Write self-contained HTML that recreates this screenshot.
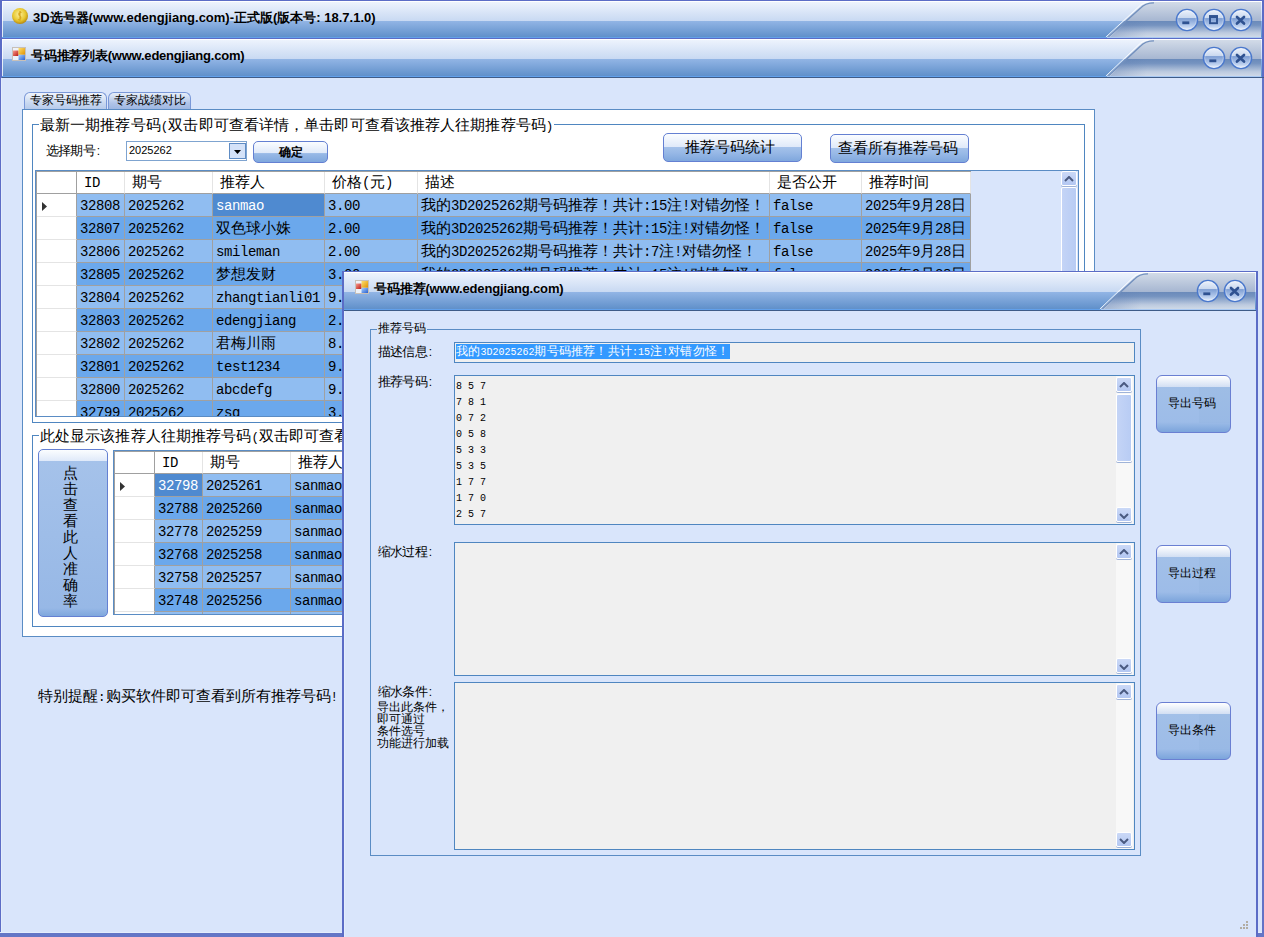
<!DOCTYPE html><html><head><meta charset="utf-8"><style>
*{margin:0;padding:0;box-sizing:border-box}
html,body{width:1264px;height:937px;overflow:hidden;background:#d9e5fb;font-family:"Liberation Sans",sans-serif;color:#000}
body{position:relative}
.a{position:absolute}
.ttl{position:absolute;font-weight:bold;font-size:13px;white-space:nowrap;color:#000;line-height:14px}
.mono{font-family:"Liberation Mono",monospace}
.gb{position:absolute;border:1px solid #4f86c0}
.gbt{position:absolute;padding:0 1px;font-size:14px;white-space:nowrap;line-height:14px}
.btn{position:absolute;border:1px solid #6480d2;border-radius:5px;background:linear-gradient(#fbfdff 0px,#dfe9f9 var(--wh,11px),#a5c2ea var(--wh,11px),#97b8e6 calc(100% - 8px),#7fa7dd 100%);font-size:15px;text-align:center;white-space:nowrap}
.grid{position:absolute;border:1px solid #5a8cc4;background:#d9e5fb;overflow:hidden}
.c{position:absolute;height:23px;border-right:1px solid #a0a0a0;border-bottom:1px solid #a0a0a0;font-size:14px;line-height:25px;padding-left:3px;overflow:hidden;white-space:nowrap;font-family:"Liberation Mono",monospace}
.hc{background:#fff;border-right:1px solid #e4e4e4;border-bottom:1px solid #a0a0a0;padding-left:7px;line-height:24px}
.rh{background:#fff;border-right:1px solid #a0a0a0;border-bottom:1px solid #e4e4e4}
.l{background:#90bdf1}
.d{background:#6ba8ec}
.sel{background:#4f8ad0;color:#fff}
.tb{position:absolute;border:1px solid #4f86c0;background:#f0f0f0}
.sb{position:absolute;background:#f8f8f8}
.arr{position:absolute;width:16px;height:15px;border:1px solid #fff;border-radius:2px;box-shadow:0 1px 0 #9fb3d8;background:linear-gradient(#cbd9f7,#b3c7f2)}
</style></head><body>
<div class="a" style="left:0;top:0;width:1px;height:937px;background:#5d6dc6"></div>
<div class="a" style="left:1px;top:78px;width:1px;height:855px;background:#e4edfc"></div>
<div class="a" style="left:1262px;top:0;width:2px;height:937px;background:#6272c6"></div>
<div class="a" style="left:0;top:932px;width:1262px;height:1px;background:#e4edfc"></div>
<div class="a" style="left:0;top:933px;width:1264px;height:4px;background:#6476c6"></div>
<div class="a" style="left:0px;top:0px;width:1264px;height:39px;overflow:hidden">
<div class="a" style="left:0;top:0;width:100%;height:1px;background:#5b6cc6"></div>
<div class="a" style="left:0;top:1px;width:100%;height:1px;background:#fff"></div>
<div class="a" style="left:0;top:2px;width:100%;height:19px;background:linear-gradient(#edf3fd,#c8d9f2)"></div>
<div class="a" style="left:0;top:21px;width:100%;height:16px;background:linear-gradient(#92b5e5,#6090ca)"></div>
<div class="a" style="left:0;top:37px;width:100%;height:1px;background:#62a0ea"></div>
<svg class="a" style="left:0;top:0" width="1264" height="38"><defs><linearGradient id="tg0" x1="0" y1="0" x2="0" y2="1"><stop offset="0" stop-color="#d2dbe8"/><stop offset="0.543" stop-color="#a6b6d1"/><stop offset="0.544" stop-color="#6a8aba"/><stop offset="0.663" stop-color="#7593c0"/><stop offset="0.88" stop-color="#bccadf"/><stop offset="1" stop-color="#cfd9e7"/></linearGradient><linearGradient id="ts0" x1="0" y1="0" x2="1" y2="0"><stop offset="0" stop-color="#5a7ab0" stop-opacity="0.7"/><stop offset="1" stop-color="#5a7ab0" stop-opacity="0"/></linearGradient></defs><path d="M1107,37 L1139,8 Q1144,2 1154,2 L1261,2 L1261,37 Z" fill="url(#tg0)"/><path d="M1108.3,37 L1140.3,8.3 Q1145,2.8 1154,2.8" fill="none" stroke="#7290be" stroke-width="1.3"/><path d="M1110,37 L1128,21 L1147,21 L1147,37 Z" fill="url(#ts0)" opacity="0.5"/><path d="M1105.9,37 L1138,7.5 Q1143,1.4 1153,1.4" fill="none" stroke="#ffffff" stroke-opacity="0.85" stroke-width="1"/><rect x="1107" y="37" width="154" height="1" fill="#a9c9f3"/></svg>
<div class="a" style="left:1262px;top:0;width:2px;height:38px;background:#5b6cc6"></div>
<svg class="a" style="left:11px;top:7px" width="18" height="18"><defs><radialGradient id="coin" cx="0.45" cy="0.4" r="0.6"><stop offset="0" stop-color="#fbf0a0"/><stop offset="0.65" stop-color="#e8c830"/><stop offset="1" stop-color="#b88a10"/></radialGradient></defs><circle cx="9" cy="9" r="8" fill="url(#coin)"/><path d="M10.5,5.5 Q7,5 8,8 Q11,10 9,12.5 Q8,13 7,12.5 M9,4 L9,14" stroke="#d8a820" stroke-width="1.2" fill="none"/></svg>
<div class="ttl" style="left:33px;top:11px;letter-spacing:0px">3D选号器(www.edengjiang.com)-正式版(版本号: 18.7.1.0)</div>
<svg class="a" style="left:1175px;top:8px" width="24" height="24"><defs><linearGradient id="cb118720" x1="0" y1="0" x2="0" y2="1"><stop offset="0" stop-color="#eef3fc"/><stop offset="0.42" stop-color="#c8d7ee"/><stop offset="0.43" stop-color="#7f9fd4"/><stop offset="0.78" stop-color="#b8cdee"/><stop offset="1" stop-color="#f2f7ff"/></linearGradient></defs><circle cx="12" cy="12" r="10.6" fill="url(#cb118720)" stroke="#4a78cc" stroke-width="1.4"/><circle cx="12" cy="12" r="9.3" fill="none" stroke="#ffffff" stroke-opacity="0.35" stroke-width="0.8"/><rect x="7.3" y="13.4" width="7" height="2.8" fill="#2f5291"/></svg>
<svg class="a" style="left:1202px;top:8px" width="24" height="24"><defs><linearGradient id="cb121420" x1="0" y1="0" x2="0" y2="1"><stop offset="0" stop-color="#eef3fc"/><stop offset="0.42" stop-color="#c8d7ee"/><stop offset="0.43" stop-color="#7f9fd4"/><stop offset="0.78" stop-color="#b8cdee"/><stop offset="1" stop-color="#f2f7ff"/></linearGradient></defs><circle cx="12" cy="12" r="10.6" fill="url(#cb121420)" stroke="#4a78cc" stroke-width="1.4"/><circle cx="12" cy="12" r="9.3" fill="none" stroke="#ffffff" stroke-opacity="0.35" stroke-width="0.8"/><rect x="8" y="8.2" width="7" height="7" fill="none" stroke="#2f5291" stroke-width="1.9"/><rect x="7" y="7.2" width="9" height="2.8" fill="#2f5291"/></svg>
<svg class="a" style="left:1229px;top:8px" width="24" height="24"><defs><linearGradient id="cb124120" x1="0" y1="0" x2="0" y2="1"><stop offset="0" stop-color="#eef3fc"/><stop offset="0.42" stop-color="#c8d7ee"/><stop offset="0.43" stop-color="#7f9fd4"/><stop offset="0.78" stop-color="#b8cdee"/><stop offset="1" stop-color="#f2f7ff"/></linearGradient></defs><circle cx="12" cy="12" r="10.6" fill="url(#cb124120)" stroke="#4a78cc" stroke-width="1.4"/><circle cx="12" cy="12" r="9.3" fill="none" stroke="#ffffff" stroke-opacity="0.35" stroke-width="0.8"/><path d="M8,9 L15,15.5 M15,9 L8,15.5" stroke="#2f5291" stroke-width="2.7" stroke-linecap="round"/></svg>
</div>
<div class="a" style="left:0px;top:38px;width:1264px;height:40px;overflow:hidden">
<div class="a" style="left:0;top:0;width:100%;height:1px;background:#5b6cc6"></div>
<div class="a" style="left:0;top:1px;width:100%;height:1px;background:#fff"></div>
<div class="a" style="left:0;top:2px;width:100%;height:19px;background:linear-gradient(#edf3fd,#c8d9f2)"></div>
<div class="a" style="left:0;top:21px;width:100%;height:17px;background:linear-gradient(#92b5e5,#6090ca)"></div>
<div class="a" style="left:0;top:38px;width:100%;height:1px;background:#62a0ea"></div>
<div class="a" style="left:0;top:39px;width:100%;height:1px;background:#3f5c88"></div>
<svg class="a" style="left:0;top:0" width="1264" height="39"><defs><linearGradient id="tg38" x1="0" y1="0" x2="0" y2="1"><stop offset="0" stop-color="#d2dbe8"/><stop offset="0.528" stop-color="#a6b6d1"/><stop offset="0.529" stop-color="#6a8aba"/><stop offset="0.648" stop-color="#7593c0"/><stop offset="0.88" stop-color="#bccadf"/><stop offset="1" stop-color="#cfd9e7"/></linearGradient><linearGradient id="ts38" x1="0" y1="0" x2="1" y2="0"><stop offset="0" stop-color="#5a7ab0" stop-opacity="0.7"/><stop offset="1" stop-color="#5a7ab0" stop-opacity="0"/></linearGradient></defs><path d="M1107,38 L1139,8 Q1144,2 1154,2 L1261,2 L1261,38 Z" fill="url(#tg38)"/><path d="M1108.3,38 L1140.3,8.3 Q1145,2.8 1154,2.8" fill="none" stroke="#7290be" stroke-width="1.3"/><path d="M1110,38 L1128,21 L1147,21 L1147,38 Z" fill="url(#ts38)" opacity="0.5"/><path d="M1105.9,38 L1138,7.5 Q1143,1.4 1153,1.4" fill="none" stroke="#ffffff" stroke-opacity="0.85" stroke-width="1"/><rect x="1107" y="38" width="154" height="1" fill="#a9c9f3"/></svg>
<div class="a" style="left:1262px;top:0;width:2px;height:39px;background:#5b6cc6"></div>
<svg class="a" style="left:12px;top:9px" width="14" height="14"><defs><linearGradient id="wr" x1="0" y1="0" x2="1" y2="1"><stop offset="0" stop-color="#f89a90"/><stop offset="1" stop-color="#b81810"/></linearGradient><linearGradient id="wy" x1="0" y1="0" x2="1" y2="1"><stop offset="0" stop-color="#fde070"/><stop offset="1" stop-color="#e09000"/></linearGradient><linearGradient id="wb" x1="0" y1="0" x2="1" y2="1"><stop offset="0" stop-color="#a8d0ff"/><stop offset="1" stop-color="#2860d0"/></linearGradient></defs><rect x="0.5" y="0.5" width="13" height="13" fill="#eef2f8" stroke="#c8c0b8" stroke-width="1"/><rect x="1" y="3.5" width="5.5" height="5.5" fill="url(#wr)"/><rect x="6.5" y="1" width="6.5" height="6.8" fill="url(#wy)"/><rect x="6.5" y="7.8" width="6.5" height="5.2" fill="url(#wb)"/></svg>
<div class="ttl" style="left:31px;top:11px;letter-spacing:-0.22px">号码推荐列表(www.edengjiang.com)</div>
<svg class="a" style="left:1202px;top:8px" width="24" height="24"><defs><linearGradient id="cb121420" x1="0" y1="0" x2="0" y2="1"><stop offset="0" stop-color="#eef3fc"/><stop offset="0.42" stop-color="#c8d7ee"/><stop offset="0.43" stop-color="#7f9fd4"/><stop offset="0.78" stop-color="#b8cdee"/><stop offset="1" stop-color="#f2f7ff"/></linearGradient></defs><circle cx="12" cy="12" r="10.6" fill="url(#cb121420)" stroke="#4a78cc" stroke-width="1.4"/><circle cx="12" cy="12" r="9.3" fill="none" stroke="#ffffff" stroke-opacity="0.35" stroke-width="0.8"/><rect x="7.3" y="13.4" width="7" height="2.8" fill="#2f5291"/></svg>
<svg class="a" style="left:1229px;top:8px" width="24" height="24"><defs><linearGradient id="cb124120" x1="0" y1="0" x2="0" y2="1"><stop offset="0" stop-color="#eef3fc"/><stop offset="0.42" stop-color="#c8d7ee"/><stop offset="0.43" stop-color="#7f9fd4"/><stop offset="0.78" stop-color="#b8cdee"/><stop offset="1" stop-color="#f2f7ff"/></linearGradient></defs><circle cx="12" cy="12" r="10.6" fill="url(#cb124120)" stroke="#4a78cc" stroke-width="1.4"/><circle cx="12" cy="12" r="9.3" fill="none" stroke="#ffffff" stroke-opacity="0.35" stroke-width="0.8"/><path d="M8,9 L15,15.5 M15,9 L8,15.5" stroke="#2f5291" stroke-width="2.7" stroke-linecap="round"/></svg>
</div>
<div class="a" style="left:0;top:0;width:2px;height:78px;background:#5b6cc6"></div>
<div class="a" style="left:2px;top:1px;width:1px;height:36px;background:rgba(255,255,255,0.8)"></div>
<div class="a" style="left:2px;top:39px;width:1px;height:37px;background:rgba(255,255,255,0.8)"></div>
<div class="a" style="left:24px;top:92px;width:83px;height:18px;border:1px solid #7a98d8;border-bottom:none;border-radius:6px 6px 0 0;background:linear-gradient(#f0f4fc,#c8d8f0 60%,#b4c8ea);font-size:12px;line-height:14px;padding-top:0px;text-align:center;white-space:nowrap">专家号码推荐</div>
<div class="a" style="left:108px;top:92px;width:83px;height:18px;border:1px solid #7a98d8;border-bottom:none;border-radius:6px 6px 0 0;background:linear-gradient(#e6eef9,#b0c4e8 60%,#9bb4e0);font-size:12px;line-height:14px;padding-top:0px;text-align:center;white-space:nowrap">专家战绩对比</div>
<div class="a" style="left:22px;top:109px;width:1073px;height:528px;border:1px solid #5a8cc4;background:#fff"></div>
<div class="gb" style="left:32px;top:124px;width:1053px;height:299px"></div>
<div class="gbt" style="left:39px;top:118px;background:#fff"><span style="font-size:15px;letter-spacing:0.1px">最新一期推荐号码</span><span style="font-size:12.5px;font-family:'Liberation Mono',monospace">(</span><span style="font-size:15px;letter-spacing:0.1px">双击即可查看详情，单击即可查看该推荐人往期推荐号码</span><span style="font-size:12.5px;font-family:'Liberation Mono',monospace">)</span></div>
<div class="a" style="left:46px;top:144px;font-size:12px;line-height:14px;white-space:nowrap"><span style="font-size:13px;letter-spacing:-0.8px">选择期号</span><span style="font-size:12px;margin-left:2px">:</span></div>
<div class="a" style="left:126px;top:141px;width:121px;height:20px;border:1px solid #7fa4d0;background:#fff"></div>
<div class="a" style="left:129px;top:144px;font-size:11px;line-height:13px">2025262</div>
<div class="a" style="left:229px;top:143px;width:17px;height:16px;border:1px solid #5f8cc4;background:#d4e2f8"></div>
<svg class="a" style="left:234px;top:150px" width="8" height="5"><path d="M0,0 L7,0 L3.5,4 Z" fill="#000"/></svg>
<div class="btn" style="left:253px;top:141px;width:75px;height:22px;font-size:12px;font-weight:bold;line-height:20px">确定</div>
<div class="btn" style="left:663px;top:133px;width:139px;height:29px;line-height:25px;padding-right:5px;--wh:13px">推荐号码统计</div>
<div class="btn" style="left:830px;top:134px;width:139px;height:29px;line-height:25px;padding-right:4px;--wh:13px">查看所有推荐号码</div>
<div class="grid" style="left:35px;top:170px;width:1044px;height:247px">
<div class="c rh" style="left:0px;top:0;width:41px;border-bottom:1px solid #a0a0a0;border-right:1px solid #a0a0a0;"></div>
<div class="c hc" style="left:41px;top:0;width:48px;"><span style="font-size:14px;font-family:'Liberation Mono',monospace;letter-spacing:-0.4px">ID</span></div>
<div class="c hc" style="left:89px;top:0;width:88px;"><span style="font-size:14.6px">期号</span></div>
<div class="c hc" style="left:177px;top:0;width:112px;"><span style="font-size:14.6px">推荐人</span></div>
<div class="c hc" style="left:289px;top:0;width:93px;"><span style="font-size:14.6px">价格</span><span style="font-size:14px;font-family:'Liberation Mono',monospace;letter-spacing:-0.4px">(</span><span style="font-size:14.6px">元</span><span style="font-size:14px;font-family:'Liberation Mono',monospace;letter-spacing:-0.4px">)</span></div>
<div class="c hc" style="left:382px;top:0;width:352px;"><span style="font-size:14.6px">描述</span></div>
<div class="c hc" style="left:734px;top:0;width:92px;"><span style="font-size:14.6px">是否公开</span></div>
<div class="c hc" style="left:826px;top:0;width:109px;"><span style="font-size:14.6px">推荐时间</span></div>
<div class="c rh" style="left:0;top:23px;width:41px"><svg class="a" style="left:6px;top:8px" width="6" height="9"><path d="M0,0 L5,4.5 L0,9 Z" fill="#333"/></svg></div>
<div class="c l" style="left:41px;top:23px;width:48px"><span style="font-size:14px;font-family:'Liberation Mono',monospace;letter-spacing:-0.4px">32808</span></div>
<div class="c l" style="left:89px;top:23px;width:88px"><span style="font-size:14px;font-family:'Liberation Mono',monospace;letter-spacing:-0.4px">2025262</span></div>
<div class="c sel" style="left:177px;top:23px;width:112px"><span style="font-size:14px;font-family:'Liberation Mono',monospace;letter-spacing:-0.4px">sanmao</span></div>
<div class="c l" style="left:289px;top:23px;width:93px"><span style="font-size:14px;font-family:'Liberation Mono',monospace;letter-spacing:-0.4px">3.00</span></div>
<div class="c l" style="left:382px;top:23px;width:352px"><span style="font-size:14.6px">我的</span><span style="font-size:14px;font-family:'Liberation Mono',monospace;letter-spacing:-0.4px">3D2025262</span><span style="font-size:14.6px">期号码推荐！共计</span><span style="font-size:14px;font-family:'Liberation Mono',monospace;letter-spacing:-0.4px">:15</span><span style="font-size:14.6px">注</span><span style="font-size:14px;font-family:'Liberation Mono',monospace;letter-spacing:-0.4px">!</span><span style="font-size:14.6px">对错勿怪！</span></div>
<div class="c l" style="left:734px;top:23px;width:92px"><span style="font-size:14px;font-family:'Liberation Mono',monospace;letter-spacing:-0.4px">false</span></div>
<div class="c l" style="left:826px;top:23px;width:109px"><span style="font-size:14px;font-family:'Liberation Mono',monospace;letter-spacing:-0.4px">2025</span><span style="font-size:14.6px">年</span><span style="font-size:14px;font-family:'Liberation Mono',monospace;letter-spacing:-0.4px">9</span><span style="font-size:14.6px">月</span><span style="font-size:14px;font-family:'Liberation Mono',monospace;letter-spacing:-0.4px">28</span><span style="font-size:14.6px">日</span></div>
<div class="c rh" style="left:0;top:46px;width:41px"></div>
<div class="c d" style="left:41px;top:46px;width:48px"><span style="font-size:14px;font-family:'Liberation Mono',monospace;letter-spacing:-0.4px">32807</span></div>
<div class="c d" style="left:89px;top:46px;width:88px"><span style="font-size:14px;font-family:'Liberation Mono',monospace;letter-spacing:-0.4px">2025262</span></div>
<div class="c d" style="left:177px;top:46px;width:112px"><span style="font-size:14.6px">双色球小姝</span></div>
<div class="c d" style="left:289px;top:46px;width:93px"><span style="font-size:14px;font-family:'Liberation Mono',monospace;letter-spacing:-0.4px">2.00</span></div>
<div class="c d" style="left:382px;top:46px;width:352px"><span style="font-size:14.6px">我的</span><span style="font-size:14px;font-family:'Liberation Mono',monospace;letter-spacing:-0.4px">3D2025262</span><span style="font-size:14.6px">期号码推荐！共计</span><span style="font-size:14px;font-family:'Liberation Mono',monospace;letter-spacing:-0.4px">:15</span><span style="font-size:14.6px">注</span><span style="font-size:14px;font-family:'Liberation Mono',monospace;letter-spacing:-0.4px">!</span><span style="font-size:14.6px">对错勿怪！</span></div>
<div class="c d" style="left:734px;top:46px;width:92px"><span style="font-size:14px;font-family:'Liberation Mono',monospace;letter-spacing:-0.4px">false</span></div>
<div class="c d" style="left:826px;top:46px;width:109px"><span style="font-size:14px;font-family:'Liberation Mono',monospace;letter-spacing:-0.4px">2025</span><span style="font-size:14.6px">年</span><span style="font-size:14px;font-family:'Liberation Mono',monospace;letter-spacing:-0.4px">9</span><span style="font-size:14.6px">月</span><span style="font-size:14px;font-family:'Liberation Mono',monospace;letter-spacing:-0.4px">28</span><span style="font-size:14.6px">日</span></div>
<div class="c rh" style="left:0;top:69px;width:41px"></div>
<div class="c l" style="left:41px;top:69px;width:48px"><span style="font-size:14px;font-family:'Liberation Mono',monospace;letter-spacing:-0.4px">32806</span></div>
<div class="c l" style="left:89px;top:69px;width:88px"><span style="font-size:14px;font-family:'Liberation Mono',monospace;letter-spacing:-0.4px">2025262</span></div>
<div class="c l" style="left:177px;top:69px;width:112px"><span style="font-size:14px;font-family:'Liberation Mono',monospace;letter-spacing:-0.4px">smileman</span></div>
<div class="c l" style="left:289px;top:69px;width:93px"><span style="font-size:14px;font-family:'Liberation Mono',monospace;letter-spacing:-0.4px">2.00</span></div>
<div class="c l" style="left:382px;top:69px;width:352px"><span style="font-size:14.6px">我的</span><span style="font-size:14px;font-family:'Liberation Mono',monospace;letter-spacing:-0.4px">3D2025262</span><span style="font-size:14.6px">期号码推荐！共计</span><span style="font-size:14px;font-family:'Liberation Mono',monospace;letter-spacing:-0.4px">:7</span><span style="font-size:14.6px">注</span><span style="font-size:14px;font-family:'Liberation Mono',monospace;letter-spacing:-0.4px">!</span><span style="font-size:14.6px">对错勿怪！</span></div>
<div class="c l" style="left:734px;top:69px;width:92px"><span style="font-size:14px;font-family:'Liberation Mono',monospace;letter-spacing:-0.4px">false</span></div>
<div class="c l" style="left:826px;top:69px;width:109px"><span style="font-size:14px;font-family:'Liberation Mono',monospace;letter-spacing:-0.4px">2025</span><span style="font-size:14.6px">年</span><span style="font-size:14px;font-family:'Liberation Mono',monospace;letter-spacing:-0.4px">9</span><span style="font-size:14.6px">月</span><span style="font-size:14px;font-family:'Liberation Mono',monospace;letter-spacing:-0.4px">28</span><span style="font-size:14.6px">日</span></div>
<div class="c rh" style="left:0;top:92px;width:41px"></div>
<div class="c d" style="left:41px;top:92px;width:48px"><span style="font-size:14px;font-family:'Liberation Mono',monospace;letter-spacing:-0.4px">32805</span></div>
<div class="c d" style="left:89px;top:92px;width:88px"><span style="font-size:14px;font-family:'Liberation Mono',monospace;letter-spacing:-0.4px">2025262</span></div>
<div class="c d" style="left:177px;top:92px;width:112px"><span style="font-size:14.6px">梦想发财</span></div>
<div class="c d" style="left:289px;top:92px;width:93px"><span style="font-size:14px;font-family:'Liberation Mono',monospace;letter-spacing:-0.4px">3.00</span></div>
<div class="c d" style="left:382px;top:92px;width:352px"><span style="font-size:14.6px">我的</span><span style="font-size:14px;font-family:'Liberation Mono',monospace;letter-spacing:-0.4px">3D2025262</span><span style="font-size:14.6px">期号码推荐！共计</span><span style="font-size:14px;font-family:'Liberation Mono',monospace;letter-spacing:-0.4px">:15</span><span style="font-size:14.6px">注</span><span style="font-size:14px;font-family:'Liberation Mono',monospace;letter-spacing:-0.4px">!</span><span style="font-size:14.6px">对错勿怪！</span></div>
<div class="c d" style="left:734px;top:92px;width:92px"><span style="font-size:14px;font-family:'Liberation Mono',monospace;letter-spacing:-0.4px">false</span></div>
<div class="c d" style="left:826px;top:92px;width:109px"><span style="font-size:14px;font-family:'Liberation Mono',monospace;letter-spacing:-0.4px">2025</span><span style="font-size:14.6px">年</span><span style="font-size:14px;font-family:'Liberation Mono',monospace;letter-spacing:-0.4px">9</span><span style="font-size:14.6px">月</span><span style="font-size:14px;font-family:'Liberation Mono',monospace;letter-spacing:-0.4px">28</span><span style="font-size:14.6px">日</span></div>
<div class="c rh" style="left:0;top:115px;width:41px"></div>
<div class="c l" style="left:41px;top:115px;width:48px"><span style="font-size:14px;font-family:'Liberation Mono',monospace;letter-spacing:-0.4px">32804</span></div>
<div class="c l" style="left:89px;top:115px;width:88px"><span style="font-size:14px;font-family:'Liberation Mono',monospace;letter-spacing:-0.4px">2025262</span></div>
<div class="c l" style="left:177px;top:115px;width:112px"><span style="font-size:14px;font-family:'Liberation Mono',monospace;letter-spacing:-0.4px">zhangtianli01</span></div>
<div class="c l" style="left:289px;top:115px;width:93px"><span style="font-size:14px;font-family:'Liberation Mono',monospace;letter-spacing:-0.4px">9.00</span></div>
<div class="c l" style="left:382px;top:115px;width:352px"><span style="font-size:14.6px">我的</span><span style="font-size:14px;font-family:'Liberation Mono',monospace;letter-spacing:-0.4px">3D2025262</span><span style="font-size:14.6px">期号码推荐！共计</span><span style="font-size:14px;font-family:'Liberation Mono',monospace;letter-spacing:-0.4px">:15</span><span style="font-size:14.6px">注</span><span style="font-size:14px;font-family:'Liberation Mono',monospace;letter-spacing:-0.4px">!</span><span style="font-size:14.6px">对错勿怪！</span></div>
<div class="c l" style="left:734px;top:115px;width:92px"><span style="font-size:14px;font-family:'Liberation Mono',monospace;letter-spacing:-0.4px">false</span></div>
<div class="c l" style="left:826px;top:115px;width:109px"><span style="font-size:14px;font-family:'Liberation Mono',monospace;letter-spacing:-0.4px">2025</span><span style="font-size:14.6px">年</span><span style="font-size:14px;font-family:'Liberation Mono',monospace;letter-spacing:-0.4px">9</span><span style="font-size:14.6px">月</span><span style="font-size:14px;font-family:'Liberation Mono',monospace;letter-spacing:-0.4px">28</span><span style="font-size:14.6px">日</span></div>
<div class="c rh" style="left:0;top:138px;width:41px"></div>
<div class="c d" style="left:41px;top:138px;width:48px"><span style="font-size:14px;font-family:'Liberation Mono',monospace;letter-spacing:-0.4px">32803</span></div>
<div class="c d" style="left:89px;top:138px;width:88px"><span style="font-size:14px;font-family:'Liberation Mono',monospace;letter-spacing:-0.4px">2025262</span></div>
<div class="c d" style="left:177px;top:138px;width:112px"><span style="font-size:14px;font-family:'Liberation Mono',monospace;letter-spacing:-0.4px">edengjiang</span></div>
<div class="c d" style="left:289px;top:138px;width:93px"><span style="font-size:14px;font-family:'Liberation Mono',monospace;letter-spacing:-0.4px">2.00</span></div>
<div class="c d" style="left:382px;top:138px;width:352px"><span style="font-size:14.6px">我的</span><span style="font-size:14px;font-family:'Liberation Mono',monospace;letter-spacing:-0.4px">3D2025262</span><span style="font-size:14.6px">期号码推荐！共计</span><span style="font-size:14px;font-family:'Liberation Mono',monospace;letter-spacing:-0.4px">:15</span><span style="font-size:14.6px">注</span><span style="font-size:14px;font-family:'Liberation Mono',monospace;letter-spacing:-0.4px">!</span><span style="font-size:14.6px">对错勿怪！</span></div>
<div class="c d" style="left:734px;top:138px;width:92px"><span style="font-size:14px;font-family:'Liberation Mono',monospace;letter-spacing:-0.4px">false</span></div>
<div class="c d" style="left:826px;top:138px;width:109px"><span style="font-size:14px;font-family:'Liberation Mono',monospace;letter-spacing:-0.4px">2025</span><span style="font-size:14.6px">年</span><span style="font-size:14px;font-family:'Liberation Mono',monospace;letter-spacing:-0.4px">9</span><span style="font-size:14.6px">月</span><span style="font-size:14px;font-family:'Liberation Mono',monospace;letter-spacing:-0.4px">28</span><span style="font-size:14.6px">日</span></div>
<div class="c rh" style="left:0;top:161px;width:41px"></div>
<div class="c l" style="left:41px;top:161px;width:48px"><span style="font-size:14px;font-family:'Liberation Mono',monospace;letter-spacing:-0.4px">32802</span></div>
<div class="c l" style="left:89px;top:161px;width:88px"><span style="font-size:14px;font-family:'Liberation Mono',monospace;letter-spacing:-0.4px">2025262</span></div>
<div class="c l" style="left:177px;top:161px;width:112px"><span style="font-size:14.6px">君梅川雨</span></div>
<div class="c l" style="left:289px;top:161px;width:93px"><span style="font-size:14px;font-family:'Liberation Mono',monospace;letter-spacing:-0.4px">8.00</span></div>
<div class="c l" style="left:382px;top:161px;width:352px"><span style="font-size:14.6px">我的</span><span style="font-size:14px;font-family:'Liberation Mono',monospace;letter-spacing:-0.4px">3D2025262</span><span style="font-size:14.6px">期号码推荐！共计</span><span style="font-size:14px;font-family:'Liberation Mono',monospace;letter-spacing:-0.4px">:15</span><span style="font-size:14.6px">注</span><span style="font-size:14px;font-family:'Liberation Mono',monospace;letter-spacing:-0.4px">!</span><span style="font-size:14.6px">对错勿怪！</span></div>
<div class="c l" style="left:734px;top:161px;width:92px"><span style="font-size:14px;font-family:'Liberation Mono',monospace;letter-spacing:-0.4px">false</span></div>
<div class="c l" style="left:826px;top:161px;width:109px"><span style="font-size:14px;font-family:'Liberation Mono',monospace;letter-spacing:-0.4px">2025</span><span style="font-size:14.6px">年</span><span style="font-size:14px;font-family:'Liberation Mono',monospace;letter-spacing:-0.4px">9</span><span style="font-size:14.6px">月</span><span style="font-size:14px;font-family:'Liberation Mono',monospace;letter-spacing:-0.4px">28</span><span style="font-size:14.6px">日</span></div>
<div class="c rh" style="left:0;top:184px;width:41px"></div>
<div class="c d" style="left:41px;top:184px;width:48px"><span style="font-size:14px;font-family:'Liberation Mono',monospace;letter-spacing:-0.4px">32801</span></div>
<div class="c d" style="left:89px;top:184px;width:88px"><span style="font-size:14px;font-family:'Liberation Mono',monospace;letter-spacing:-0.4px">2025262</span></div>
<div class="c d" style="left:177px;top:184px;width:112px"><span style="font-size:14px;font-family:'Liberation Mono',monospace;letter-spacing:-0.4px">test1234</span></div>
<div class="c d" style="left:289px;top:184px;width:93px"><span style="font-size:14px;font-family:'Liberation Mono',monospace;letter-spacing:-0.4px">9.00</span></div>
<div class="c d" style="left:382px;top:184px;width:352px"><span style="font-size:14.6px">我的</span><span style="font-size:14px;font-family:'Liberation Mono',monospace;letter-spacing:-0.4px">3D2025262</span><span style="font-size:14.6px">期号码推荐！共计</span><span style="font-size:14px;font-family:'Liberation Mono',monospace;letter-spacing:-0.4px">:15</span><span style="font-size:14.6px">注</span><span style="font-size:14px;font-family:'Liberation Mono',monospace;letter-spacing:-0.4px">!</span><span style="font-size:14.6px">对错勿怪！</span></div>
<div class="c d" style="left:734px;top:184px;width:92px"><span style="font-size:14px;font-family:'Liberation Mono',monospace;letter-spacing:-0.4px">false</span></div>
<div class="c d" style="left:826px;top:184px;width:109px"><span style="font-size:14px;font-family:'Liberation Mono',monospace;letter-spacing:-0.4px">2025</span><span style="font-size:14.6px">年</span><span style="font-size:14px;font-family:'Liberation Mono',monospace;letter-spacing:-0.4px">9</span><span style="font-size:14.6px">月</span><span style="font-size:14px;font-family:'Liberation Mono',monospace;letter-spacing:-0.4px">28</span><span style="font-size:14.6px">日</span></div>
<div class="c rh" style="left:0;top:207px;width:41px"></div>
<div class="c l" style="left:41px;top:207px;width:48px"><span style="font-size:14px;font-family:'Liberation Mono',monospace;letter-spacing:-0.4px">32800</span></div>
<div class="c l" style="left:89px;top:207px;width:88px"><span style="font-size:14px;font-family:'Liberation Mono',monospace;letter-spacing:-0.4px">2025262</span></div>
<div class="c l" style="left:177px;top:207px;width:112px"><span style="font-size:14px;font-family:'Liberation Mono',monospace;letter-spacing:-0.4px">abcdefg</span></div>
<div class="c l" style="left:289px;top:207px;width:93px"><span style="font-size:14px;font-family:'Liberation Mono',monospace;letter-spacing:-0.4px">9.00</span></div>
<div class="c l" style="left:382px;top:207px;width:352px"><span style="font-size:14.6px">我的</span><span style="font-size:14px;font-family:'Liberation Mono',monospace;letter-spacing:-0.4px">3D2025262</span><span style="font-size:14.6px">期号码推荐！共计</span><span style="font-size:14px;font-family:'Liberation Mono',monospace;letter-spacing:-0.4px">:15</span><span style="font-size:14.6px">注</span><span style="font-size:14px;font-family:'Liberation Mono',monospace;letter-spacing:-0.4px">!</span><span style="font-size:14.6px">对错勿怪！</span></div>
<div class="c l" style="left:734px;top:207px;width:92px"><span style="font-size:14px;font-family:'Liberation Mono',monospace;letter-spacing:-0.4px">false</span></div>
<div class="c l" style="left:826px;top:207px;width:109px"><span style="font-size:14px;font-family:'Liberation Mono',monospace;letter-spacing:-0.4px">2025</span><span style="font-size:14.6px">年</span><span style="font-size:14px;font-family:'Liberation Mono',monospace;letter-spacing:-0.4px">9</span><span style="font-size:14.6px">月</span><span style="font-size:14px;font-family:'Liberation Mono',monospace;letter-spacing:-0.4px">28</span><span style="font-size:14.6px">日</span></div>
<div class="c rh" style="left:0;top:230px;width:41px"></div>
<div class="c d" style="left:41px;top:230px;width:48px"><span style="font-size:14px;font-family:'Liberation Mono',monospace;letter-spacing:-0.4px">32799</span></div>
<div class="c d" style="left:89px;top:230px;width:88px"><span style="font-size:14px;font-family:'Liberation Mono',monospace;letter-spacing:-0.4px">2025262</span></div>
<div class="c d" style="left:177px;top:230px;width:112px"><span style="font-size:14px;font-family:'Liberation Mono',monospace;letter-spacing:-0.4px">zsq</span></div>
<div class="c d" style="left:289px;top:230px;width:93px"><span style="font-size:14px;font-family:'Liberation Mono',monospace;letter-spacing:-0.4px">3.00</span></div>
<div class="c d" style="left:382px;top:230px;width:352px"><span style="font-size:14.6px">我的</span><span style="font-size:14px;font-family:'Liberation Mono',monospace;letter-spacing:-0.4px">3D2025262</span><span style="font-size:14.6px">期号码推荐！共计</span><span style="font-size:14px;font-family:'Liberation Mono',monospace;letter-spacing:-0.4px">:15</span><span style="font-size:14.6px">注</span><span style="font-size:14px;font-family:'Liberation Mono',monospace;letter-spacing:-0.4px">!</span><span style="font-size:14.6px">对错勿怪！</span></div>
<div class="c d" style="left:734px;top:230px;width:92px"><span style="font-size:14px;font-family:'Liberation Mono',monospace;letter-spacing:-0.4px">false</span></div>
<div class="c d" style="left:826px;top:230px;width:109px"><span style="font-size:14px;font-family:'Liberation Mono',monospace;letter-spacing:-0.4px">2025</span><span style="font-size:14.6px">年</span><span style="font-size:14px;font-family:'Liberation Mono',monospace;letter-spacing:-0.4px">9</span><span style="font-size:14.6px">月</span><span style="font-size:14px;font-family:'Liberation Mono',monospace;letter-spacing:-0.4px">28</span><span style="font-size:14.6px">日</span></div>
<div class="a" style="left:0;top:0;width:1px;height:247px;background:#a0a0a0"></div>
<div class="a" style="left:0;top:0;width:935px;height:1px;background:#a0a0a0"></div>
<div class="a" style="left:1025px;top:0;width:17px;height:246px;background:#d9e5fb"></div><div class="arr" style="left:1025px;top:0px"></div><svg class="a" style="left:1028px;top:5px" width="10" height="6"><path d="M1,5 L5,1 L9,5" stroke="#4a5a80" stroke-width="2" fill="none"/></svg><div class="a" style="left:1025px;top:16px;width:16px;height:240px;border:1px solid #fff;border-radius:2px;background:linear-gradient(90deg,#c4d4f6,#b8ccf4)"></div>
</div>
<div class="gb" style="left:32px;top:435px;width:1053px;height:192px"></div>
<div class="gbt" style="left:39px;top:429px;background:#fff"><span style="font-size:15px;letter-spacing:0.1px">此处显示该推荐人往期推荐号码</span><span style="font-size:12.5px;font-family:'Liberation Mono',monospace">(</span><span style="font-size:15px;letter-spacing:0.1px">双击即可查看详情</span><span style="font-size:12.5px;font-family:'Liberation Mono',monospace">)</span></div>
<div class="btn" style="left:38px;top:449px;width:70px;height:168px;font-size:15px;line-height:16px;padding-top:14.5px;padding-right:5px;white-space:normal;width:70px">点<br>击<br>查<br>看<br>此<br>人<br>准<br>确<br>率</div>
<div class="grid" style="left:113px;top:450px;width:965px;height:165px">
<div class="c rh" style="left:0px;top:0;width:41px;border-bottom:1px solid #a0a0a0;border-right:1px solid #a0a0a0;"></div>
<div class="c hc" style="left:41px;top:0;width:48px;"><span style="font-size:14px;font-family:'Liberation Mono',monospace;letter-spacing:-0.4px">ID</span></div>
<div class="c hc" style="left:89px;top:0;width:88px;"><span style="font-size:14.6px">期号</span></div>
<div class="c hc" style="left:177px;top:0;width:112px;"><span style="font-size:14.6px">推荐人</span></div>
<div class="c hc" style="left:289px;top:0;width:93px;"><span style="font-size:14.6px">价格</span><span style="font-size:14px;font-family:'Liberation Mono',monospace;letter-spacing:-0.4px">(</span><span style="font-size:14.6px">元</span><span style="font-size:14px;font-family:'Liberation Mono',monospace;letter-spacing:-0.4px">)</span></div>
<div class="c hc" style="left:382px;top:0;width:352px;"><span style="font-size:14.6px">描述</span></div>
<div class="c hc" style="left:734px;top:0;width:92px;"><span style="font-size:14.6px">是否公开</span></div>
<div class="c hc" style="left:826px;top:0;width:109px;"><span style="font-size:14.6px">推荐时间</span></div>
<div class="c rh" style="left:0;top:23px;width:41px"><svg class="a" style="left:6px;top:8px" width="6" height="9"><path d="M0,0 L5,4.5 L0,9 Z" fill="#333"/></svg></div>
<div class="c sel" style="left:41px;top:23px;width:48px"><span style="font-size:14px;font-family:'Liberation Mono',monospace;letter-spacing:-0.4px">32798</span></div>
<div class="c l" style="left:89px;top:23px;width:88px"><span style="font-size:14px;font-family:'Liberation Mono',monospace;letter-spacing:-0.4px">2025261</span></div>
<div class="c l" style="left:177px;top:23px;width:112px"><span style="font-size:14px;font-family:'Liberation Mono',monospace;letter-spacing:-0.4px">sanmao</span></div>
<div class="c l" style="left:289px;top:23px;width:93px"><span style="font-size:14px;font-family:'Liberation Mono',monospace;letter-spacing:-0.4px">3.00</span></div>
<div class="c l" style="left:382px;top:23px;width:352px"></div>
<div class="c l" style="left:734px;top:23px;width:92px"></div>
<div class="c l" style="left:826px;top:23px;width:109px"></div>
<div class="c rh" style="left:0;top:46px;width:41px"></div>
<div class="c d" style="left:41px;top:46px;width:48px"><span style="font-size:14px;font-family:'Liberation Mono',monospace;letter-spacing:-0.4px">32788</span></div>
<div class="c d" style="left:89px;top:46px;width:88px"><span style="font-size:14px;font-family:'Liberation Mono',monospace;letter-spacing:-0.4px">2025260</span></div>
<div class="c d" style="left:177px;top:46px;width:112px"><span style="font-size:14px;font-family:'Liberation Mono',monospace;letter-spacing:-0.4px">sanmao</span></div>
<div class="c d" style="left:289px;top:46px;width:93px"><span style="font-size:14px;font-family:'Liberation Mono',monospace;letter-spacing:-0.4px">3.00</span></div>
<div class="c d" style="left:382px;top:46px;width:352px"></div>
<div class="c d" style="left:734px;top:46px;width:92px"></div>
<div class="c d" style="left:826px;top:46px;width:109px"></div>
<div class="c rh" style="left:0;top:69px;width:41px"></div>
<div class="c l" style="left:41px;top:69px;width:48px"><span style="font-size:14px;font-family:'Liberation Mono',monospace;letter-spacing:-0.4px">32778</span></div>
<div class="c l" style="left:89px;top:69px;width:88px"><span style="font-size:14px;font-family:'Liberation Mono',monospace;letter-spacing:-0.4px">2025259</span></div>
<div class="c l" style="left:177px;top:69px;width:112px"><span style="font-size:14px;font-family:'Liberation Mono',monospace;letter-spacing:-0.4px">sanmao</span></div>
<div class="c l" style="left:289px;top:69px;width:93px"><span style="font-size:14px;font-family:'Liberation Mono',monospace;letter-spacing:-0.4px">3.00</span></div>
<div class="c l" style="left:382px;top:69px;width:352px"></div>
<div class="c l" style="left:734px;top:69px;width:92px"></div>
<div class="c l" style="left:826px;top:69px;width:109px"></div>
<div class="c rh" style="left:0;top:92px;width:41px"></div>
<div class="c d" style="left:41px;top:92px;width:48px"><span style="font-size:14px;font-family:'Liberation Mono',monospace;letter-spacing:-0.4px">32768</span></div>
<div class="c d" style="left:89px;top:92px;width:88px"><span style="font-size:14px;font-family:'Liberation Mono',monospace;letter-spacing:-0.4px">2025258</span></div>
<div class="c d" style="left:177px;top:92px;width:112px"><span style="font-size:14px;font-family:'Liberation Mono',monospace;letter-spacing:-0.4px">sanmao</span></div>
<div class="c d" style="left:289px;top:92px;width:93px"><span style="font-size:14px;font-family:'Liberation Mono',monospace;letter-spacing:-0.4px">3.00</span></div>
<div class="c d" style="left:382px;top:92px;width:352px"></div>
<div class="c d" style="left:734px;top:92px;width:92px"></div>
<div class="c d" style="left:826px;top:92px;width:109px"></div>
<div class="c rh" style="left:0;top:115px;width:41px"></div>
<div class="c l" style="left:41px;top:115px;width:48px"><span style="font-size:14px;font-family:'Liberation Mono',monospace;letter-spacing:-0.4px">32758</span></div>
<div class="c l" style="left:89px;top:115px;width:88px"><span style="font-size:14px;font-family:'Liberation Mono',monospace;letter-spacing:-0.4px">2025257</span></div>
<div class="c l" style="left:177px;top:115px;width:112px"><span style="font-size:14px;font-family:'Liberation Mono',monospace;letter-spacing:-0.4px">sanmao</span></div>
<div class="c l" style="left:289px;top:115px;width:93px"><span style="font-size:14px;font-family:'Liberation Mono',monospace;letter-spacing:-0.4px">3.00</span></div>
<div class="c l" style="left:382px;top:115px;width:352px"></div>
<div class="c l" style="left:734px;top:115px;width:92px"></div>
<div class="c l" style="left:826px;top:115px;width:109px"></div>
<div class="c rh" style="left:0;top:138px;width:41px"></div>
<div class="c d" style="left:41px;top:138px;width:48px"><span style="font-size:14px;font-family:'Liberation Mono',monospace;letter-spacing:-0.4px">32748</span></div>
<div class="c d" style="left:89px;top:138px;width:88px"><span style="font-size:14px;font-family:'Liberation Mono',monospace;letter-spacing:-0.4px">2025256</span></div>
<div class="c d" style="left:177px;top:138px;width:112px"><span style="font-size:14px;font-family:'Liberation Mono',monospace;letter-spacing:-0.4px">sanmao</span></div>
<div class="c d" style="left:289px;top:138px;width:93px"><span style="font-size:14px;font-family:'Liberation Mono',monospace;letter-spacing:-0.4px">3.00</span></div>
<div class="c d" style="left:382px;top:138px;width:352px"></div>
<div class="c d" style="left:734px;top:138px;width:92px"></div>
<div class="c d" style="left:826px;top:138px;width:109px"></div>
<div class="c rh" style="left:0;top:161px;width:41px"></div>
<div class="c l" style="left:41px;top:161px;width:48px"></div>
<div class="c l" style="left:89px;top:161px;width:88px"></div>
<div class="c l" style="left:177px;top:161px;width:112px"></div>
<div class="c l" style="left:289px;top:161px;width:93px"></div>
<div class="c l" style="left:382px;top:161px;width:352px"></div>
<div class="c l" style="left:734px;top:161px;width:92px"></div>
<div class="c l" style="left:826px;top:161px;width:109px"></div>
<div class="a" style="left:0;top:0;width:1px;height:165px;background:#a0a0a0"></div>
<div class="a" style="left:0;top:0;width:935px;height:1px;background:#a0a0a0"></div>
</div>
<div class="a" style="left:38px;top:688px;font-size:14px;line-height:16px;white-space:nowrap"><span style="font-size:15px">特别提醒</span><span style="font-size:12.5px;font-family:'Liberation Mono',monospace">:</span><span style="font-size:15px">购买软件即可查看到所有推荐号码</span><span style="font-size:12.5px;font-family:'Liberation Mono',monospace">!</span></div>
<div class="a" style="left:342px;top:271px;width:916px;height:666px;background:#d9e5fb"></div>
<div class="a" style="left:342px;top:271px;width:916px;height:40px;overflow:hidden">
<div class="a" style="left:0;top:0;width:100%;height:1px;background:#5b6cc6"></div>
<div class="a" style="left:0;top:1px;width:100%;height:1px;background:#fff"></div>
<div class="a" style="left:0;top:2px;width:100%;height:19px;background:linear-gradient(#edf3fd,#c8d9f2)"></div>
<div class="a" style="left:0;top:21px;width:100%;height:17px;background:linear-gradient(#92b5e5,#6090ca)"></div>
<div class="a" style="left:0;top:38px;width:100%;height:1px;background:#62a0ea"></div>
<div class="a" style="left:0;top:39px;width:100%;height:1px;background:#3f5c88"></div>
<svg class="a" style="left:0;top:0" width="916" height="39"><defs><linearGradient id="tg271" x1="0" y1="0" x2="0" y2="1"><stop offset="0" stop-color="#d2dbe8"/><stop offset="0.528" stop-color="#a6b6d1"/><stop offset="0.529" stop-color="#6a8aba"/><stop offset="0.648" stop-color="#7593c0"/><stop offset="0.88" stop-color="#bccadf"/><stop offset="1" stop-color="#cfd9e7"/></linearGradient><linearGradient id="ts271" x1="0" y1="0" x2="1" y2="0"><stop offset="0" stop-color="#5a7ab0" stop-opacity="0.7"/><stop offset="1" stop-color="#5a7ab0" stop-opacity="0"/></linearGradient></defs><path d="M759,38 L791,8 Q796,2 806,2 L913,2 L913,38 Z" fill="url(#tg271)"/><path d="M760.3,38 L792.3,8.3 Q797,2.8 806,2.8" fill="none" stroke="#7290be" stroke-width="1.3"/><path d="M762,38 L780,21 L799,21 L799,38 Z" fill="url(#ts271)" opacity="0.5"/><path d="M757.9,38 L790,7.5 Q795,1.4 805,1.4" fill="none" stroke="#ffffff" stroke-opacity="0.85" stroke-width="1"/><rect x="759" y="38" width="154" height="1" fill="#a9c9f3"/></svg>
<div class="a" style="left:914px;top:0;width:2px;height:39px;background:#5b6cc6"></div>
<svg class="a" style="left:13px;top:9px" width="14" height="14"><defs><linearGradient id="wr" x1="0" y1="0" x2="1" y2="1"><stop offset="0" stop-color="#f89a90"/><stop offset="1" stop-color="#b81810"/></linearGradient><linearGradient id="wy" x1="0" y1="0" x2="1" y2="1"><stop offset="0" stop-color="#fde070"/><stop offset="1" stop-color="#e09000"/></linearGradient><linearGradient id="wb" x1="0" y1="0" x2="1" y2="1"><stop offset="0" stop-color="#a8d0ff"/><stop offset="1" stop-color="#2860d0"/></linearGradient></defs><rect x="0.5" y="0.5" width="13" height="13" fill="#eef2f8" stroke="#c8c0b8" stroke-width="1"/><rect x="1" y="3.5" width="5.5" height="5.5" fill="url(#wr)"/><rect x="6.5" y="1" width="6.5" height="6.8" fill="url(#wy)"/><rect x="6.5" y="7.8" width="6.5" height="5.2" fill="url(#wb)"/></svg>
<div class="ttl" style="left:32px;top:11px;letter-spacing:-0.15px">号码推荐(www.edengjiang.com)</div>
<svg class="a" style="left:854px;top:8px" width="24" height="24"><defs><linearGradient id="cb86620" x1="0" y1="0" x2="0" y2="1"><stop offset="0" stop-color="#eef3fc"/><stop offset="0.42" stop-color="#c8d7ee"/><stop offset="0.43" stop-color="#7f9fd4"/><stop offset="0.78" stop-color="#b8cdee"/><stop offset="1" stop-color="#f2f7ff"/></linearGradient></defs><circle cx="12" cy="12" r="10.6" fill="url(#cb86620)" stroke="#4a78cc" stroke-width="1.4"/><circle cx="12" cy="12" r="9.3" fill="none" stroke="#ffffff" stroke-opacity="0.35" stroke-width="0.8"/><rect x="7.3" y="13.4" width="7" height="2.8" fill="#2f5291"/></svg>
<svg class="a" style="left:881px;top:8px" width="24" height="24"><defs><linearGradient id="cb89320" x1="0" y1="0" x2="0" y2="1"><stop offset="0" stop-color="#eef3fc"/><stop offset="0.42" stop-color="#c8d7ee"/><stop offset="0.43" stop-color="#7f9fd4"/><stop offset="0.78" stop-color="#b8cdee"/><stop offset="1" stop-color="#f2f7ff"/></linearGradient></defs><circle cx="12" cy="12" r="10.6" fill="url(#cb89320)" stroke="#4a78cc" stroke-width="1.4"/><circle cx="12" cy="12" r="9.3" fill="none" stroke="#ffffff" stroke-opacity="0.35" stroke-width="0.8"/><path d="M8,9 L15,15.5 M15,9 L8,15.5" stroke="#2f5291" stroke-width="2.7" stroke-linecap="round"/></svg>
</div>
<div class="a" style="left:342px;top:271px;width:2px;height:666px;background:#5b6cc6"></div>
<div class="a" style="left:344px;top:311px;width:1px;height:626px;background:#e4edfc"></div>
<div class="a" style="left:1256px;top:271px;width:2px;height:666px;background:#5b6cc6"></div>
<div class="gb" style="left:370px;top:329px;width:771px;height:527px;border-color:#5a8cc4"></div>
<div class="gbt" style="left:377px;top:322px;background:#d9e5fb;font-size:12px;line-height:13px">推荐号码</div>
<div class="a" style="left:378px;top:345px;font-size:12px;line-height:13px;white-space:nowrap"><span style="font-size:13px;letter-spacing:-0.8px">描述信息</span><span style="font-size:12px;margin-left:2px">:</span></div>
<div class="a" style="left:378px;top:375px;font-size:12px;line-height:13px;white-space:nowrap"><span style="font-size:13px;letter-spacing:-0.8px">推荐号码</span><span style="font-size:12px;margin-left:2px">:</span></div>
<div class="a" style="left:378px;top:545px;font-size:12px;line-height:13px;white-space:nowrap"><span style="font-size:13px;letter-spacing:-0.8px">缩水过程</span><span style="font-size:12px;margin-left:2px">:</span></div>
<div class="a" style="left:378px;top:685px;font-size:12px;line-height:13px;white-space:nowrap"><span style="font-size:13px;letter-spacing:-0.8px">缩水条件</span><span style="font-size:12px;margin-left:2px">:</span></div>
<div class="a" style="left:377px;top:701px;font-size:12px;line-height:12px;white-space:nowrap">导出此条件，<br>即可通过<br>条件选号<br>功能进行加载</div>
<div class="tb" style="left:454px;top:342px;width:681px;height:21px"></div>
<div class="a" style="left:456px;top:344px;height:15px;background:#3399ff;color:#fff;font-size:12px;line-height:15px;white-space:nowrap;padding-right:1px"><span style="font-size:12px;letter-spacing:0.2px">我的</span><span style="font-size:10px;font-family:'Liberation Mono',monospace">3D2025262</span><span style="font-size:12px;letter-spacing:0.2px">期号码推荐！共计</span><span style="font-size:10px;font-family:'Liberation Mono',monospace">:15</span><span style="font-size:12px;letter-spacing:0.2px">注</span><span style="font-size:10px;font-family:'Liberation Mono',monospace">!</span><span style="font-size:12px;letter-spacing:0.2px">对错勿怪！</span></div>
<div class="tb" style="left:454px;top:375px;width:681px;height:150px"></div>
<div class="sb" style="left:1116px;top:376px;width:17px;height:148px"></div>
<div class="arr" style="left:1116px;top:377px"></div>
<svg class="a" style="left:1119px;top:382px" width="10" height="6"><path d="M1,5 L5,1 L9,5" stroke="#4a5a80" stroke-width="2" fill="none"/></svg>
<div class="arr" style="left:1116px;top:507px"></div>
<svg class="a" style="left:1119px;top:513px" width="10" height="6"><path d="M1,1 L5,5 L9,1" stroke="#4a5a80" stroke-width="2" fill="none"/></svg>
<div class="a" style="left:1116px;top:394px;width:16px;box-shadow:0 1px 0 #9fb3d8;height:68px;border:1px solid #fff;border-radius:2px;background:linear-gradient(90deg,#c4d4f6,#b8ccf4)"></div>
<div class="a mono" style="left:456px;top:379px;font-size:10px;line-height:16px;white-space:pre">8 5 7<br>7 8 1<br>0 7 2<br>0 5 8<br>5 3 3<br>5 3 5<br>1 7 7<br>1 7 0<br>2 5 7</div>
<div class="tb" style="left:454px;top:542px;width:681px;height:134px"></div>
<div class="sb" style="left:1116px;top:543px;width:17px;height:132px"></div>
<div class="arr" style="left:1116px;top:544px"></div>
<svg class="a" style="left:1119px;top:549px" width="10" height="6"><path d="M1,5 L5,1 L9,5" stroke="#4a5a80" stroke-width="2" fill="none"/></svg>
<div class="arr" style="left:1116px;top:658px"></div>
<svg class="a" style="left:1119px;top:664px" width="10" height="6"><path d="M1,1 L5,5 L9,1" stroke="#4a5a80" stroke-width="2" fill="none"/></svg>
<div class="tb" style="left:454px;top:682px;width:681px;height:168px"></div>
<div class="sb" style="left:1116px;top:683px;width:17px;height:166px"></div>
<div class="arr" style="left:1116px;top:684px"></div>
<svg class="a" style="left:1119px;top:689px" width="10" height="6"><path d="M1,5 L5,1 L9,5" stroke="#4a5a80" stroke-width="2" fill="none"/></svg>
<div class="arr" style="left:1116px;top:832px"></div>
<svg class="a" style="left:1119px;top:838px" width="10" height="6"><path d="M1,1 L5,5 L9,1" stroke="#4a5a80" stroke-width="2" fill="none"/></svg>
<div class="a" style="left:1156px;top:375px;width:75px;height:58px;border:1px solid #6a7fd2;border-radius:6px;overflow:hidden;background:linear-gradient(#ffffff 0px,#d2dff3 11px,#a2c0e8 11px,#9dbce8 46px,#78a2da 57px)"><div class="a" style="left:42px;top:11px;width:32px;height:36px;background:rgba(110,150,210,0.08)"></div><div class="a" style="left:0;top:20px;width:69px;text-align:center;font-size:12px;line-height:14px">导出号码</div></div>
<div class="a" style="left:1156px;top:545px;width:75px;height:58px;border:1px solid #6a7fd2;border-radius:6px;overflow:hidden;background:linear-gradient(#ffffff 0px,#d2dff3 11px,#a2c0e8 11px,#9dbce8 46px,#78a2da 57px)"><div class="a" style="left:42px;top:11px;width:32px;height:36px;background:rgba(110,150,210,0.08)"></div><div class="a" style="left:0;top:20px;width:69px;text-align:center;font-size:12px;line-height:14px">导出过程</div></div>
<div class="a" style="left:1156px;top:702px;width:75px;height:58px;border:1px solid #6a7fd2;border-radius:6px;overflow:hidden;background:linear-gradient(#ffffff 0px,#d2dff3 11px,#a2c0e8 11px,#9dbce8 46px,#78a2da 57px)"><div class="a" style="left:42px;top:11px;width:32px;height:36px;background:rgba(110,150,210,0.08)"></div><div class="a" style="left:0;top:20px;width:69px;text-align:center;font-size:12px;line-height:14px">导出条件</div></div>
<div class="a" style="left:1246px;top:921px;width:2px;height:2px;background:#b2ada3"></div>
<div class="a" style="left:1243px;top:924px;width:2px;height:2px;background:#b2ada3"></div>
<div class="a" style="left:1246px;top:924px;width:2px;height:2px;background:#b2ada3"></div>
<div class="a" style="left:1240px;top:927px;width:2px;height:2px;background:#b2ada3"></div>
<div class="a" style="left:1243px;top:927px;width:2px;height:2px;background:#b2ada3"></div>
<div class="a" style="left:1246px;top:927px;width:2px;height:2px;background:#b2ada3"></div>
</body></html>
